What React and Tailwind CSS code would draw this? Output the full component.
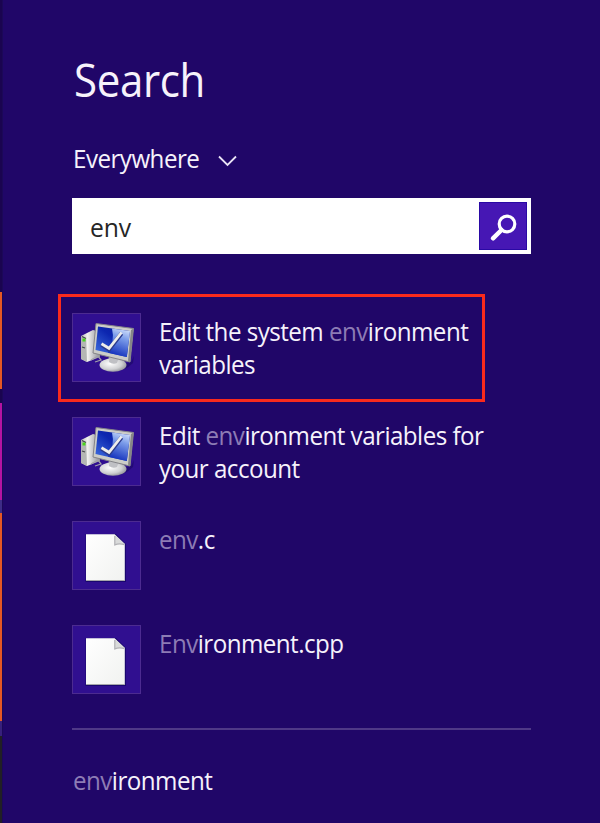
import React from "react";

function Hit({ children }) {
  return <span className="text-[#8d7cb5]">{children}</span>;
}

function Line({ children }) {
  return (
    <div className="w-max origin-left scale-x-[0.93] whitespace-nowrap leading-[33px] tracking-[-0.58px]">
      {children}
    </div>
  );
}

function ComputerIcon() {
  return (
    <svg width="67" height="67" viewBox="0 0 67 67" className="block">
      <defs>
        <linearGradient id="tower" x1="0" x2="1">
          <stop offset="0" stopColor="#b9bab9" />
          <stop offset="0.35" stopColor="#f2f2f0" />
          <stop offset="1" stopColor="#8c8d96" />
        </linearGradient>
        <linearGradient id="screen" x1="1" y1="0" x2="0.1" y2="1">
          <stop offset="0" stopColor="#0a1c9c" />
          <stop offset="0.45" stopColor="#0c26b0" />
          <stop offset="1" stopColor="#3f6fe0" />
        </linearGradient>
        <linearGradient id="glare" x1="0.8" y1="0" x2="0.5" y2="1">
          <stop offset="0" stopColor="#d3e1fb" />
          <stop offset="0.35" stopColor="#7c9dea" />
          <stop offset="1" stopColor="#1230bc" />
        </linearGradient>
        <radialGradient id="base" cx="0.4" cy="0.4" r="0.7">
          <stop offset="0" stopColor="#ffffff" />
          <stop offset="0.6" stopColor="#d0d1d3" />
          <stop offset="1" stopColor="#85868c" />
        </radialGradient>
      </defs>
      <path d="M8 22 L20 16 L27 18 V43 L14 48 L8 45 Z" fill="url(#tower)" />
      <path d="M8 22 L13 24 L14 48 L8 45 Z" fill="#b4b6b4" />
      <path d="M9 22.5 L13 24.5 M9 33 L12 34" stroke="#44454b" strokeWidth="1.2" />
      <rect x="9.5" y="24.5" width="3" height="3" fill="#49d51c" />
      <path d="M18 46 L25 42 L28 46 L22 48" fill="none" stroke="#a1a1a8" strokeWidth="1.3" />
      <path d="M38 53 L58 48 L61 42 L60 49 Q52 57 42 57 Z" fill="#18075f" opacity="0.55" />
      <path d="M36 41 L47 43 L46 51 H35 Z" fill="#a9aaaf" />
      <ellipse cx="40" cy="51" rx="13.5" ry="6.7" fill="url(#base)" />
      <path d="M37 42 L46 43 L44 49 Q40 51 36 48 Z" fill="#bfc0c4" />
      <path d="M23 9.5 L60.5 14.5 L57 48 L20 39 Z" fill="#cccdc8" stroke="#858589" strokeWidth="1" />
      <path d="M60.5 14.5 L57 48 L55 46.5 L58 16 Z" fill="#858688" />
      <path d="M25 12.5 L57 17 L53.8 43 L22.5 36 Z" fill="url(#screen)" />
      <path d="M39 14.5 L57 17 L53.8 43 L35 38.8 Q42 27 39 14.5 Z" fill="url(#glare)" />
      <path d="M28.5 30.5 L36 35.5 L48.5 19.5" fill="none" stroke="#2b3a8c" strokeWidth="4.2" />
      <path d="M28.5 29.8 L36 34.3 L48.5 18.5" fill="none" stroke="#ededeb" strokeWidth="2.8" />
    </svg>
  );
}

function FileIcon() {
  return (
    <svg width="67" height="67" viewBox="0 0 67 67" className="block">
      <defs>
        <linearGradient id="paper" x1="0" y1="0" x2="1" y2="1">
          <stop offset="0" stopColor="#ffffff" />
          <stop offset="1" stopColor="#f1f2f0" />
        </linearGradient>
      </defs>
      <path d="M12.5 12 H43 L53 22 V60 H12.5 Z" fill="#150566" opacity="0.8" />
      <path d="M13 12.3 H41.5 L51.8 22 V59 H13 Z" fill="url(#paper)" />
      <path d="M13 58.5 H52" stroke="#a6a6aa" strokeWidth="1" />
      <path d="M41.5 12.3 L51.8 22 Q46 21 42 23 Q42.5 18 41.5 12.3 Z" fill="#d9dada" />
      <path d="M41.8 14 V22.8 Q46 21 51.5 22.5" fill="none" stroke="#b2b2b6" strokeWidth="1.3" />
    </svg>
  );
}

function Result({ icon, children }) {
  return (
    <li className="flex h-[69px] gap-[17px]">
      <div className="size-[69px] shrink-0 border border-[#4c2b90] bg-[#300f90]">{icon}</div>
      <div className="pl-[1px] pt-[2px]">{children}</div>
    </li>
  );
}

export default function App() {
  return (
    <main className="flex h-[823px] w-[600px] overflow-hidden bg-[#200668] font-['Open_Sans','Noto_Sans',sans-serif] text-[26px] text-[#f6f2fb]">
      <aside className="flex w-[3px] shrink-0 flex-col border-r border-[#1b0858]">
        <div className="h-[292px] bg-[#1a0450]" />
        <div className="h-[97px] bg-[#e65724]" />
        <div className="h-[14px] bg-[#1a0450]" />
        <div className="h-[97px] bg-[#b313a3]" />
        <div className="h-[13px] bg-[#3e2c87]" />
        <div className="h-[208px] bg-[#e65724]" />
        <div className="h-[15px] bg-[#37207c]" />
        <div className="grow bg-[#211f25]" />
      </aside>
      <div className="flex w-[528px] flex-col">
        <h1 className="ml-[71px] mt-[50px] h-[60px] w-max origin-left scale-x-[0.935] whitespace-nowrap text-[45px] font-normal leading-[60px] tracking-[-0.4px]">
          Search
        </h1>
        <div className="ml-[69px] mt-[32px] flex h-[33px] items-center leading-[33px]">
          <div className="w-[146px] pl-[1px]">
            <Line>Everywhere</Line>
          </div>
          <svg width="20" height="12" viewBox="0 0 20 12" className="mt-[5px]">
            <path d="M1 1.5 L9.5 10 L18 1.5" fill="none" stroke="#e9e3f5" strokeWidth="1.8" />
          </svg>
        </div>
        <div className="ml-[69px] mt-[23px] flex h-[56px] w-[459px] items-center justify-between bg-white pl-[18px] pr-[4px]">
          <span className="origin-left scale-x-[0.95] pt-[2px] tracking-[-0.1px] text-[#262626]">env</span>
          <div className="size-[48px] border border-[#2a09a5] bg-[#4617b4]">
            <svg width="46" height="46" viewBox="0 0 46 46">
              <circle cx="27" cy="21" r="7.8" fill="none" stroke="#fff" strokeWidth="3.2" />
              <path d="M21.5 27 L13 35.3" stroke="#fff" strokeWidth="4.5" strokeLinecap="round" />
            </svg>
          </div>
        </div>
        <ul className="ml-[55px] mt-[40px] flex flex-col">
          <div className="h-[108px] w-[427px] border-[3px] border-[#fa2a1c] pl-[11px] pt-[16px]">
            <Result icon={<ComputerIcon />}>
              <Line>Edit the system <Hit>env</Hit>ironment</Line>
              <Line>variables</Line>
            </Result>
          </div>
          <div className="ml-[14px] mt-[15px] flex flex-col gap-[35px]">
            <Result icon={<ComputerIcon />}>
              <Line>Edit <Hit>env</Hit>ironment variables for</Line>
              <Line>your account</Line>
            </Result>
            <Result icon={<FileIcon />}>
              <Line><Hit>env</Hit>.c</Line>
            </Result>
            <Result icon={<FileIcon />}>
              <Line><Hit>Env</Hit>ironment.cpp</Line>
            </Result>
          </div>
        </ul>
        <div className="ml-[69px] mt-[34px] h-[2px] w-[459px] bg-[#4f3887]" />
        <div className="ml-[70px] mt-[34px]">
          <Line><Hit>env</Hit>ironment</Line>
        </div>
      </div>
    </main>
  );
}
